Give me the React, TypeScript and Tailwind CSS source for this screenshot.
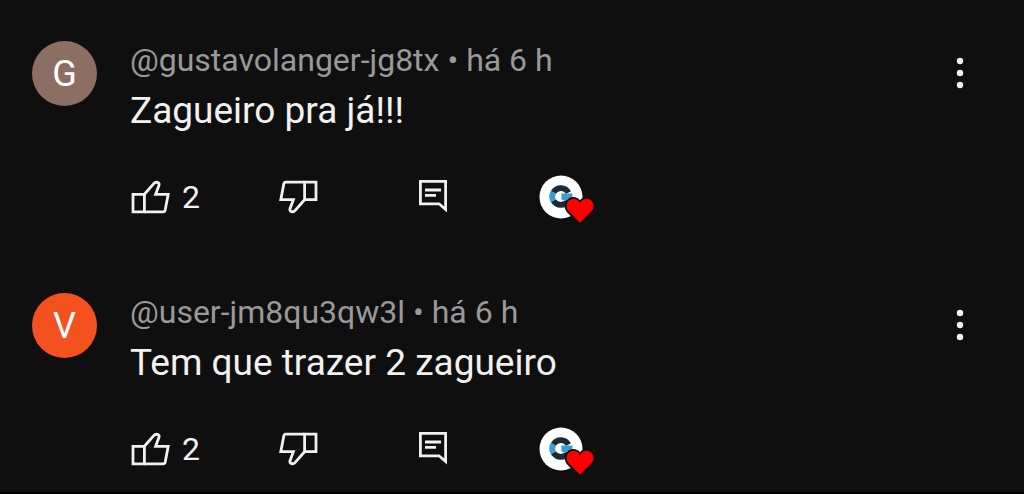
type Comment = {
  author: string;
  time: string;
  text: string;
  likes: number;
  initial: string;
  color: string;
};

const comments: Comment[] = [
  {
    author: '@gustavolanger-jg8tx',
    time: 'há 6 h',
    text: 'Zagueiro pra já!!!',
    likes: 2,
    initial: 'G',
    color: 'bg-[#8d6e63]',
  },
  {
    author: '@user-jm8qu3qw3l',
    time: 'há 6 h',
    text: 'Tem que trazer 2 zagueiro',
    likes: 2,
    initial: 'V',
    color: 'bg-[#f4511e]',
  },
];

const ThumbIcon = ({ className = '' }: { className?: string }) => (
  <svg
    viewBox="0 0 40 38"
    className={`h-[38px] w-10 ${className}`}
    fill="none"
    stroke="currentColor"
    strokeWidth="2.8"
    aria-hidden="true"
  >
    <path d="M3 16.3H14.4V33.8H3z" />
    <path d="M14.4 16.3 24 5.4C25.8 3.4 29.8 4.2 29 7.3L25.6 16.3H38.2L35.2 32Q34.8 33.8 33.2 33.8H14.4" />
  </svg>
);

const ReplyIcon = () => (
  <svg
    viewBox="0 0 36 38"
    className="h-[38px] w-9"
    fill="none"
    stroke="currentColor"
    strokeWidth="2.8"
    aria-hidden="true"
  >
    <path d="M5.4 3.4H30.6V31.4L24 25.8H5.4z" />
    <path d="M10 12H26M10 17.4H21" />
  </svg>
);

// The heart hangs below the avatar circle, so the svg is allowed to overflow
const CreatorHeart = () => (
  <svg viewBox="0 0 58 44" className="h-11 w-[58px] overflow-visible" role="img" aria-label="Curtido pelo criador">
    <circle cx="22" cy="22" r="21.5" fill="#fff" />
    <g fill="none" strokeWidth="5.8">
      <path d="M14.4 17.4A8.6 8.6 0 0 1 29.4 17.6" stroke="#1c2a33" />
      <path d="M14.4 25.6A8.6 8.6 0 0 0 29.2 25.8" stroke="#1c2a33" />
      <path d="M14.4 17.2A8.6 8.6 0 0 0 14.4 25.8" stroke="#3d9bd3" />
    </g>
    <path d="M22.4 18.6H33.4V24H28.8L27 26 22.4 24.6z" fill="#3d9bd3" />
    <path
      d="M41 49 29.1 37C25.3 33 25.9 26.8 30.1 24.2C33.9 21.8 38.5 22.8 41 26.6C43.5 22.8 48.1 21.8 51.9 24.2C56.1 26.8 56.7 33 52.9 37z"
      fill="#f00"
      stroke="#0f0f0f"
      strokeWidth="1.8"
    />
  </svg>
);

const MoreIcon = () => (
  <svg viewBox="0 0 8 32" className="h-8 w-2" fill="currentColor" aria-hidden="true">
    <circle cx="4" cy="4" r="3.2" />
    <circle cx="4" cy="16" r="3.2" />
    <circle cx="4" cy="28" r="3.2" />
  </svg>
);

const CommentItem = ({ comment }: { comment: Comment }) => (
  <li className="flex items-start">
    <div
      className={`flex size-[65px] shrink-0 items-center justify-center rounded-full text-4xl text-white ${comment.color}`}
    >
      {comment.initial}
    </div>

    <div className="ml-[33px] min-w-0 flex-1">
      <p className="text-[32px] leading-[38px] text-[#999]">
        {comment.author} • {comment.time}
      </p>
      <p className="text-[37px] leading-[64px]">{comment.text}</p>

      <div className="mt-8 grid grid-cols-[149px_136px_124px_auto] items-center">
        <button type="button" aria-label="Gostei" className="flex items-center gap-3 text-[32px] leading-[38px]">
          <ThumbIcon />
          {comment.likes}
        </button>
        <button type="button" aria-label="Não gostei">
          <ThumbIcon className="rotate-180" />
        </button>
        <button type="button" aria-label="Responder">
          <ReplyIcon />
        </button>
        <CreatorHeart />
      </div>
    </div>

    <button type="button" aria-label="Mais opções" className="mt-4 shrink-0">
      <MoreIcon />
    </button>
  </li>
);

export default function App() {
  return (
    <main className="min-h-screen border-b-2 border-black bg-[#0f0f0f] font-[Roboto,sans-serif] text-[#f1f1f1]">
      <ul className="flex flex-col gap-[74px] pt-[41px] pr-[60px] pl-8">
        {comments.map((comment) => (
          <CommentItem key={comment.author} comment={comment} />
        ))}
      </ul>
    </main>
  );
}
